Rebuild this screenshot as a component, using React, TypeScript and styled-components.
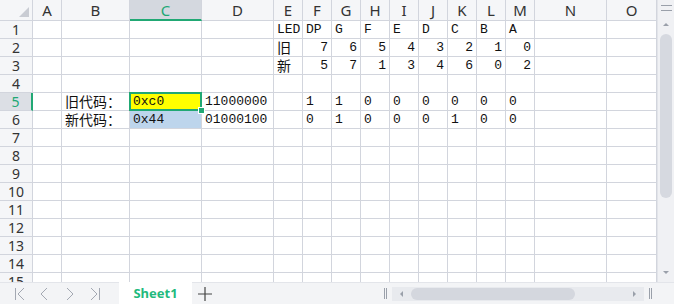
import styled, { createGlobalStyle } from 'styled-components';

const GlobalStyle = createGlobalStyle`
  html, body { margin: 0; padding: 0; background: #fff; }
  body { width: 674px; height: 304px; overflow: hidden; }
`;

const GREEN = '#21a874';
const GRID = '#d2d5dd';
const COL_WIDTHS = [33, 29, 68, 72, 72, 29, 29, 29, 29, 29, 29, 29, 29, 29, 72, 50];
const COLS = ['A', 'B', 'C', 'D', 'E', 'F', 'G', 'H', 'I', 'J', 'K', 'L', 'M', 'N', 'O'];
const ROW_COUNT = 15;

type CellData = { text: string; align?: 'left' | 'right'; kind?: 'selected' | 'blue' };

const cells: Record<string, CellData> = {
  E1: { text: 'LED' }, F1: { text: 'DP' }, G1: { text: 'G' }, H1: { text: 'F' }, I1: { text: 'E' },
  J1: { text: 'D' }, K1: { text: 'C' }, L1: { text: 'B' }, M1: { text: 'A' },
  E2: { text: '旧' }, E3: { text: '新' },
  B5: { text: '旧代码：' }, C5: { text: '0xc0', kind: 'selected' }, D5: { text: '11000000' },
  B6: { text: '新代码：' }, C6: { text: '0x44', kind: 'blue' }, D6: { text: '01000100' },
};

['7', '6', '5', '4', '3', '2', '1', '0'].forEach((v, i) => {
  cells[`${COLS[5 + i]}2`] = { text: v, align: 'right' };
});
['5', '7', '1', '3', '4', '6', '0', '2'].forEach((v, i) => {
  cells[`${COLS[5 + i]}3`] = { text: v, align: 'right' };
});
['1', '1', '0', '0', '0', '0', '0', '0'].forEach((v, i) => {
  cells[`${COLS[5 + i]}5`] = { text: v };
});
['0', '1', '0', '0', '0', '1', '0', '0'].forEach((v, i) => {
  cells[`${COLS[5 + i]}6`] = { text: v };
});

const Frame = styled.div`
  width: 674px;
  height: 304px;
  display: flex;
  flex-direction: column;
  overflow: hidden;
`;

const Main = styled.div`
  height: 282px;
  display: flex;
  overflow: hidden;
`;

const Sheet = styled.div`
  width: 657px;
  display: grid;
  grid-template-columns: ${COL_WIDTHS.map((w) => `${w}px`).join(' ')};
  grid-template-rows: 21px repeat(${ROW_COUNT}, 18px);
  overflow: hidden;
`;

const Corner = styled.div`
  background: #f5f6f8;
  border-right: 1px solid ${GRID};
  border-bottom: 1px solid ${GRID};
  position: relative;
  &::after {
    content: '';
    position: absolute;
    right: 3px;
    bottom: 3px;
    width: 0;
    height: 0;
    border-left: 10px solid transparent;
    border-bottom: 10px solid #c9ccd3;
  }
`;

const ColHead = styled.div<{ $active?: boolean }>`
  box-sizing: border-box;
  background: ${({ $active }) => ($active ? '#d4d8df' : '#f5f6f8')};
  border-right: 1px solid ${GRID};
  border-bottom: ${({ $active }) => ($active ? `2px solid ${GREEN}` : `1px solid ${GRID}`)};
  color: ${({ $active }) => ($active ? GREEN : '#333')};
  font: 15px 'Noto Sans', 'Liberation Sans', sans-serif;
  display: flex;
  align-items: center;
  justify-content: center;
  padding-top: ${({ $active }) => ($active ? '1px' : '0')};
`;

const RowHead = styled.div<{ $active?: boolean }>`
  box-sizing: border-box;
  background: ${({ $active }) => ($active ? '#dcdfe5' : '#f5f6f8')};
  border-right: ${({ $active }) => ($active ? `2px solid ${GREEN}` : `1px solid ${GRID}`)};
  border-bottom: 1px solid ${GRID};
  color: ${({ $active }) => ($active ? GREEN : '#333')};
  font: 14px 'Noto Sans', 'Liberation Sans', sans-serif;
  line-height: 17px;
  display: flex;
  align-items: center;
  justify-content: center;
`;

const Cell = styled.div<{ $align: string; $kind?: string }>`
  box-sizing: border-box;
  position: relative;
  border-right: 1px solid ${GRID};
  border-bottom: 1px solid ${GRID};
  background: ${({ $kind }) => ($kind === 'selected' ? '#ffff00' : $kind === 'blue' ? '#bdd5ec' : '#fff')};
  z-index: ${({ $kind }) => ($kind === 'selected' ? 2 : 'auto')};
  font: 13px 'Liberation Mono', 'Noto Sans CJK SC', monospace;
  color: #111;
  line-height: 17px;
  padding: 0 3px 0 3px;
  display: flex;
  align-items: center;
  justify-content: ${({ $align }) => ($align === 'right' ? 'flex-end' : 'flex-start')};
  white-space: nowrap;
  ${({ $kind }) =>
    $kind === 'selected'
      ? `&::before {
          content: '';
          position: absolute;
          left: -1px;
          top: -1px;
          right: -1px;
          bottom: -1px;
          border: 2px solid ${GREEN};
        }`
      : ''}
`;

const CjkText = styled.span`
  font: 14px 'Noto Sans CJK SC', sans-serif;
  line-height: 17px;
`;

const FillHandle = styled.span`
  position: absolute;
  right: -4px;
  bottom: -4px;
  width: 5px;
  height: 5px;
  background: ${GREEN};
  border: 1px solid #fff;
`;

const VScroll = styled.div`
  width: 17px;
  background: #f0f1f4;
  border-left: 1px solid #e2e4e9;
  box-sizing: border-box;
  display: flex;
  flex-direction: column;
  align-items: center;
`;

const GripH = styled.div`
  width: 11px;
  height: 4px;
  margin-top: 5px;
  border-top: 1px solid #9aa0aa;
  border-bottom: 1px solid #9aa0aa;
`;

const Arrow = styled.div<{ $dir: 'up' | 'down' | 'left' | 'right' }>`
  width: 0;
  height: 0;
  ${({ $dir }) =>
    $dir === 'up'
      ? 'border-left: 3px solid transparent; border-right: 3px solid transparent; border-bottom: 3px solid #9aa0aa;'
      : $dir === 'down'
      ? 'border-left: 3px solid transparent; border-right: 3px solid transparent; border-top: 3px solid #9aa0aa;'
      : $dir === 'left'
      ? 'border-top: 3px solid transparent; border-bottom: 3px solid transparent; border-right: 3px solid #9aa0aa;'
      : 'border-top: 3px solid transparent; border-bottom: 3px solid transparent; border-left: 3px solid #9aa0aa;'}
`;

const VThumb = styled.div`
  width: 12px;
  height: 164px;
  margin-top: 8px;
  border-radius: 6px;
  background: #d6d9e0;
`;

const Spacer = styled.div<{ $h?: number }>`
  height: ${({ $h }) => ($h ? `${$h}px` : 'auto')};
  flex: ${({ $h }) => ($h ? 'none' : '1')};
`;

const TabBar = styled.div`
  height: 22px;
  background: #f3f4f6;
  border-top: 1px solid #e3e5ea;
  box-sizing: border-box;
  display: flex;
  align-items: stretch;
`;

const NavGroup = styled.div`
  width: 119px;
  display: flex;
  align-items: center;
  padding-left: 14px;
  box-sizing: border-box;
  gap: 13px;
`;

const NavIcon = styled.svg`
  width: 12px;
  height: 14px;
  display: block;
`;

const Tab = styled.div`
  width: 73px;
  margin-top: -1px;
  background: #fff;
  color: #1fba7d;
  font: bold 13px 'Noto Sans', 'Liberation Sans', sans-serif;
  display: flex;
  align-items: center;
  justify-content: center;
`;

const AddTab = styled.div`
  width: 26px;
  display: flex;
  align-items: center;
  justify-content: center;
`;

const HScrollArea = styled.div`
  margin-left: auto;
  display: flex;
  align-items: center;
  padding-right: 22px;
  gap: 5px;
`;

const Split = styled.div`
  width: 3px;
  height: 11px;
  border-left: 1px solid #9aa0aa;
  border-right: 1px solid #9aa0aa;
  box-sizing: border-box;
`;

const HTrack = styled.div`
  width: 252px;
  height: 14px;
  background: #e8eaee;
  display: flex;
  align-items: center;
  padding: 0 8px 0 8px;
  box-sizing: border-box;
`;

const HThumb = styled.div`
  width: 164px;
  height: 12px;
  margin-left: 8px;
  margin-right: auto;
  border-radius: 6px;
  background: #d4d7de;
`;

const renderText = (text: string) =>
  /[\u4e00-\u9fff\uff1a]/.test(text) ? <CjkText>{text}</CjkText> : text;

export default function App() {
  const rows = Array.from({ length: ROW_COUNT }, (_, i) => i + 1);
  return (
    <Frame>
      <GlobalStyle />
      <Main>
        <Sheet>
          <Corner />
          {COLS.map((c) => (
            <ColHead key={c} $active={c === 'C'}>{c}</ColHead>
          ))}
          {rows.map((r) => [
            <RowHead key={`h${r}`} $active={r === 5}>{r}</RowHead>,
            ...COLS.map((c) => {
              const d = cells[`${c}${r}`];
              return (
                <Cell key={`${c}${r}`} $align={d?.align ?? 'left'} $kind={d?.kind}>
                  {d ? renderText(d.text) : null}
                  {d?.kind === 'selected' && <FillHandle />}
                </Cell>
              );
            }),
          ])}
        </Sheet>
        <VScroll>
          <GripH />
          <Spacer $h={12} />
          <Arrow $dir="up" />
          <VThumb />
          <Spacer />
          <Arrow $dir="down" />
          <Spacer $h={8} />
        </VScroll>
      </Main>
      <TabBar>
        <NavGroup>
          <NavIcon viewBox="0 0 12 14"><path d="M1.5 1v12M10 1L4 7l6 6" stroke="#a3a8b2" strokeWidth="1" fill="none" /></NavIcon>
          <NavIcon viewBox="0 0 12 14"><path d="M8 1L2 7l6 6" stroke="#a3a8b2" strokeWidth="1" fill="none" /></NavIcon>
          <NavIcon viewBox="0 0 12 14"><path d="M3 1l6 6-6 6" stroke="#a3a8b2" strokeWidth="1" fill="none" /></NavIcon>
          <NavIcon viewBox="0 0 12 14"><path d="M10.5 1v12M2 1l6 6-6 6" stroke="#a3a8b2" strokeWidth="1" fill="none" /></NavIcon>
        </NavGroup>
        <Tab>Sheet1</Tab>
        <AddTab>
          <svg width="14" height="14" viewBox="0 0 14 14"><path d="M7 0v14M0 7h14" stroke="#444" strokeWidth="1.2" /></svg>
        </AddTab>
        <HScrollArea>
          <Split />
          <HTrack>
            <Arrow $dir="left" />
            <HThumb />
            <Arrow $dir="right" />
          </HTrack>
          <Split />
        </HScrollArea>
      </TabBar>
    </Frame>
  );
}
